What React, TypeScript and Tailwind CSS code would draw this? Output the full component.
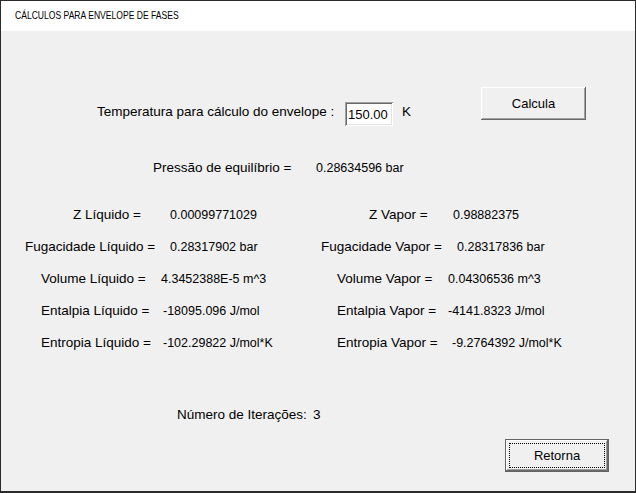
import React from "react";

const font = { fontFamily: '"Liberation Sans", Arial, sans-serif' };

type Row = { pl: number; w1: number; w2: number; w3: number; a: string; b: string; c: string; d: string };

const rows: Row[] = [
  { pl: 72, w1: 97, w2: 199, w3: 84, a: "Z Líquido =", b: "0.00099771029", c: "Z Vapor =", d: "0.98882375" },
  { pl: 24, w1: 145, w2: 151, w3: 136, a: "Fugacidade Líquido =", b: "0.28317902 bar", c: "Fugacidade Vapor =", d: "0.28317836 bar" },
  { pl: 40, w1: 120, w2: 176, w3: 111, a: "Volume Líquido =", b: "4.3452388E-5 m^3", c: "Volume Vapor =", d: "0.04306536 m^3" },
  { pl: 40, w1: 122, w2: 174, w3: 111, a: "Entalpia Líquido =", b: "-18095.096 J/mol", c: "Entalpia Vapor =", d: "-4141.8323 J/mol" },
  { pl: 40, w1: 122, w2: 174, w3: 115, a: "Entropia Líquido =", b: "-102.29822 J/mol*K", c: "Entropia Vapor =", d: "-9.2764392 J/mol*K" },
];

export default function App() {
  return (
    <div
      className="w-[636px] h-[493px] bg-[#2b2b2b] pt-px pl-px pr-px pb-[2px] text-black overflow-hidden"
      style={font}
    >
      <div className="w-full h-full flex flex-col">
        <div className="h-[30px] bg-white flex items-center pl-[14px]">
          <span className="inline-block text-[11.5px] origin-left scale-x-[0.745]">CÁLCULOS PARA ENVELOPE DE FASES</span>
        </div>
        <div className="flex-1 bg-[#f0f0f0] flex flex-col text-[13.5px] whitespace-nowrap">
          {/* Temperature row */}
          <div className="mt-[56px] h-[39px] flex items-start">
            <div className="w-[480px] h-full flex items-end pl-[96px]">
              <div className="h-[24px] flex items-center">
                <span className="w-[248px] -mt-[3px]">Temperatura para cálculo do envelope :</span>
                <div className="w-[48px] h-[24px] bg-white flex items-center pl-[3px] pt-[1px] text-[13px] shadow-[inset_1px_1px_#a0a0a0,inset_-1px_-1px_#ffffff,inset_2px_2px_#696969,inset_-2px_-2px_#e3e3e3]">
                  150.00
                </div>
                <span className="ml-[9px] -mt-[3px]">K</span>
              </div>
            </div>
            <button className="w-[105px] h-[33px] bg-[#f0f0f0] flex items-center justify-center text-[13px] shadow-[inset_-1px_-1px_#696969,inset_1px_1px_#ffffff,inset_-2px_-2px_#a0a0a0,inset_2px_2px_#f0f0f0]">
              Calcula
            </button>
          </div>

          {/* Pressao */}
          <div className="mt-[32px] h-[20px] leading-[20px] flex pl-[152px]">
            <span className="w-[163px]">Pressão de equilíbrio =</span>
            <span className="text-[12.5px]">0.28634596 bar</span>
          </div>

          {/* Grid rows */}
          <div className="mt-[27px] flex flex-col gap-[12px]">
            {rows.map((r, i) => (
              <div key={i} className="h-[20px] leading-[20px] flex" style={{ paddingLeft: r.pl }}>
                <span style={{ width: r.w1 }}>{r.a}</span>
                <span className="text-[12.5px]" style={{ width: r.w2 }}>{r.b}</span>
                <span style={{ width: r.w3 }}>{r.c}</span>
                <span className="text-[12.5px]">{r.d}</span>
              </div>
            ))}
          </div>

          {/* Iteracoes */}
          <div className="mt-[52px] h-[20px] leading-[20px] flex pl-[176px]">
            <span className="w-[136px]">Número de Iterações:</span>
            <span>3</span>
          </div>

          {/* Retorna */}
          <div className="mt-[14px] flex pl-[504px]">
            <button className="relative w-[104px] h-[33px] bg-[#f0f0f0] border border-[#646464] flex items-center justify-center text-[13px] shadow-[inset_-1px_-1px_#696969,inset_1px_1px_#ffffff,inset_-2px_-2px_#a0a0a0,inset_2px_2px_#f0f0f0]">
              <span className="absolute inset-[3px] border border-dotted border-black"></span>
              Retorna
            </button>
          </div>
        </div>
      </div>
    </div>
  );
}
